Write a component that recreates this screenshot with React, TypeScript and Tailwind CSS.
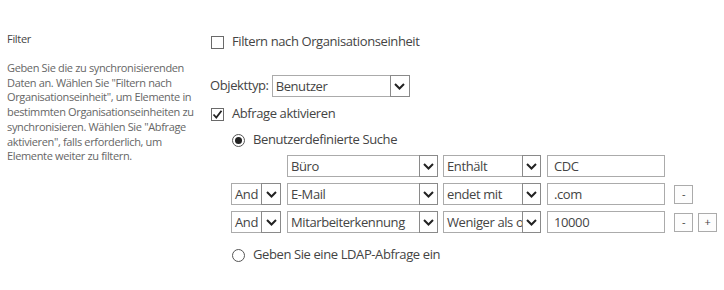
import React from "react";

const font = { fontFamily: '"Segoe UI", "Open Sans", "Liberation Sans", sans-serif' };

function Chevron() {
  return (
    <svg width="11" height="7" viewBox="0 0 11 7">
      <path d="M1 1 L5.5 5.5 L10 1" fill="none" stroke="#222" strokeWidth="2" />
    </svg>
  );
}

function Select({ value, width, arrow = 19 }: { value: string; width: number; arrow?: number }) {
  return (
    <div className="flex h-[22px] shrink-0" style={{ width }}>
      <div className="flex-1 min-w-0 overflow-hidden whitespace-nowrap border border-[#ababab] border-r-0 bg-white pl-[3px] text-[13px] leading-[20px] text-[#444]">
        {value}
      </div>
      <div className="flex shrink-0 items-center justify-center border border-[#8a8a8a] bg-white" style={{ width: arrow }}>
        <Chevron />
      </div>
    </div>
  );
}

function Input({ value }: { value: string }) {
  return (
    <div className="h-[22px] w-[118px] shrink-0 border border-[#ababab] bg-white pl-[6px] text-[13px] leading-[20px] text-[#444]">
      {value}
    </div>
  );
}

function SmallButton({ label }: { label: string }) {
  return (
    <div className="flex h-[19px] w-[19px] items-center justify-center border border-[#ababab] bg-[#fdfdfd] text-[11px] text-[#444]">
      {label}
    </div>
  );
}

function Checkbox({ checked }: { checked?: boolean }) {
  return (
    <div className="flex h-[13px] w-[13px] shrink-0 items-center justify-center border border-[#6a6a6a] bg-white">
      {checked && (
        <svg width="11" height="11" viewBox="0 0 11 11">
          <path d="M1.5 5.5 L4.3 8.5 L9.5 1.8" fill="none" stroke="#222" strokeWidth="1.8" />
        </svg>
      )}
    </div>
  );
}

function Radio({ checked }: { checked?: boolean }) {
  return (
    <div className="flex h-[13px] w-[13px] shrink-0 items-center justify-center rounded-full border border-[#555] bg-white">
      {checked && <div className="h-[7px] w-[7px] rounded-full bg-[#222]" />}
    </div>
  );
}

type Row = { and?: boolean; field: string; op: string; value: string; minus?: boolean; plus?: boolean };

const rows: Row[] = [
  { field: "Büro", op: "Enthält", value: "CDC" },
  { and: true, field: "E-Mail", op: "endet mit", value: ".com", minus: true },
  { and: true, field: "Mitarbeiterkennung", op: "Weniger als oder gleich", value: "10000", minus: true, plus: true },
];

export default function App() {
  return (
    <div className="flex h-[290px] w-[724px] bg-white tracking-[-0.4px]" style={font}>
      <div className="w-[203px] shrink-0 pl-[7px] pt-[31px] pr-[6px]">
        <div className="text-[11px] leading-[16px] tracking-[-0.3px] text-[#444]">Filter</div>
        <p className="mt-[14px] text-[11px] leading-[14.7px] tracking-[-0.35px] text-[#666]">
          Geben Sie die zu synchronisierenden Daten an. Wählen Sie "Filtern nach Organisationseinheit", um Elemente in
          bestimmten Organisationseinheiten zu synchronisieren. Wählen Sie "Abfrage aktivieren", falls erforderlich, um
          Elemente weiter zu filtern.
        </p>
      </div>

      <div className="flex flex-col pt-[32px] text-[13px] text-[#444]">
        <div className="flex h-[20px] items-center gap-[8px] pl-[8px]">
          <Checkbox />
          <span>Filtern nach Organisationseinheit</span>
        </div>

        <div className="mt-[23px] flex h-[22px] items-center gap-[3px] pl-[7px]">
          <span>Objekttyp:</span>
          <Select value="Benutzer" width={138} arrow={20} />
        </div>

        <div className="mt-[7px] flex h-[20px] items-center gap-[8px] pl-[8px]">
          <Checkbox checked />
          <span>Abfrage aktivieren</span>
        </div>

        <div className="mt-[6px] flex h-[20px] items-center gap-[8px] pl-[29px]">
          <Radio checked />
          <span>Benutzerdefinierte Suche</span>
        </div>

        <div className="mt-[5px] flex flex-col gap-[6px] pl-[28px]">
          {rows.map((r) => (
            <div key={r.field} className="flex h-[22px] items-center">
              <div className="w-[50px] shrink-0">{r.and && <Select value="And" width={50} arrow={20} />}</div>
              <div className="ml-[6px]">
                <Select value={r.field} width={151} />
              </div>
              <div className="ml-[5px]">
                <Select value={r.op} width={98} />
              </div>
              <div className="ml-[6px]">
                <Input value={r.value} />
              </div>
              <div className="ml-[9px] flex gap-[5px]">
                {r.minus && <SmallButton label="-" />}
                {r.plus && <SmallButton label="+" />}
              </div>
            </div>
          ))}
        </div>

        <div className="mt-[12px] flex h-[20px] items-center gap-[8px] pl-[29px]">
          <Radio />
          <span>Geben Sie eine LDAP-Abfrage ein</span>
        </div>
      </div>
    </div>
  );
}
